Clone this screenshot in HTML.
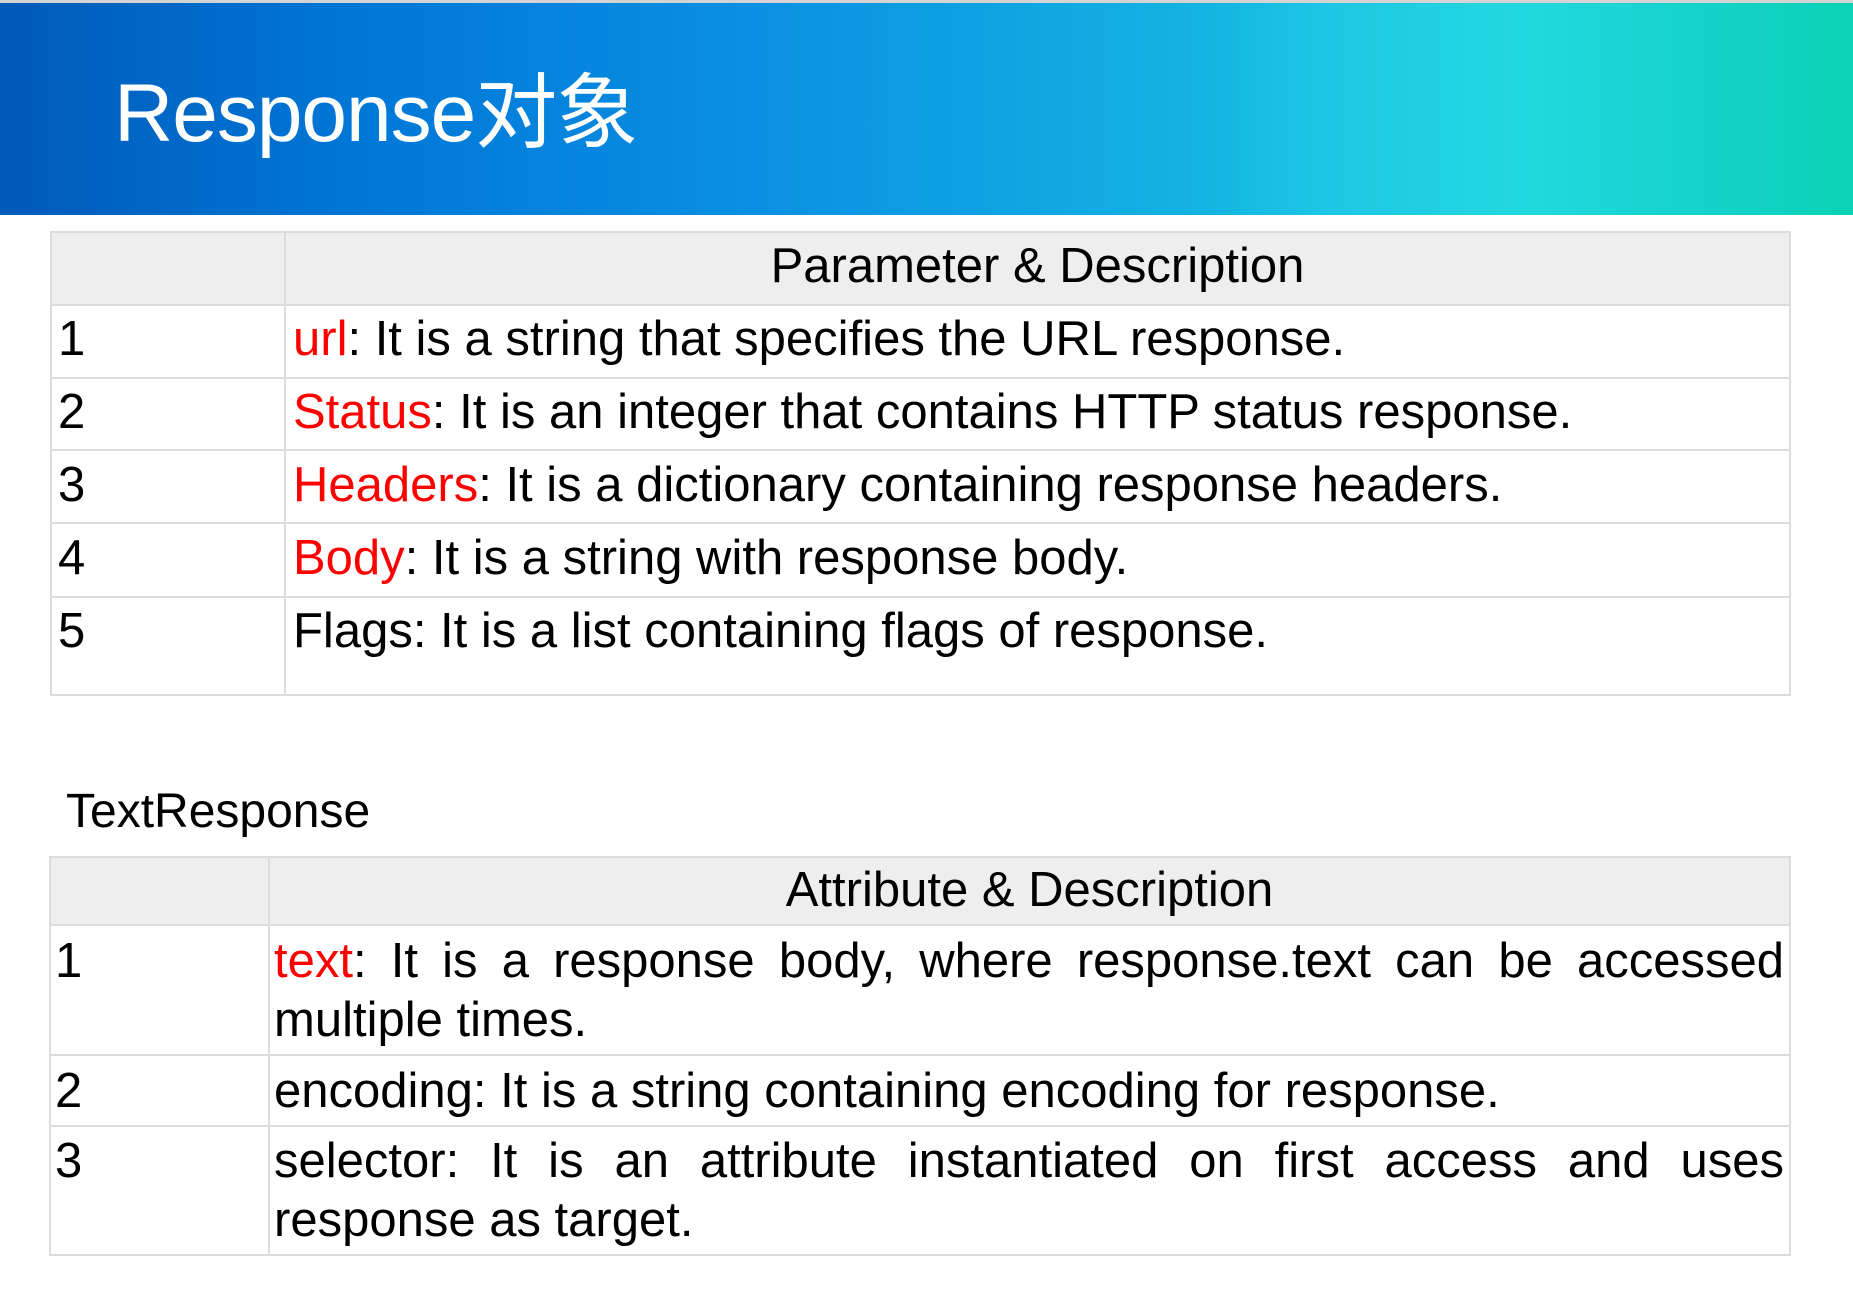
<!DOCTYPE html>
<html><head><meta charset="utf-8"><style>
*{margin:0;padding:0;box-sizing:border-box}
body{width:1853px;height:1295px;background:#fff;position:relative;overflow:hidden;font-family:"Liberation Sans",Arial,sans-serif;color:#000}
.top{position:absolute;left:0;top:0;width:1853px;height:3px;background:#d4d4d4}
.banner{position:absolute;left:0;top:3px;width:1853px;height:212px;background:linear-gradient(90deg,#005ab8 0%,#0078d8 20%,#0a8fe2 40%,#14b4e2 65%,#1ec8e4 72%,#22d8e0 82%,#14d2c8 93%,#0ad2b4 100%)}
.title{position:absolute;left:114px;top:64px;font-size:82px;line-height:100px;color:#fff;font-family:"Liberation Sans","Noto Sans CJK SC",sans-serif;white-space:nowrap;letter-spacing:-1px}
.b{position:absolute;background:#dcdcdc}
.hd{position:absolute;background:#eeeeee}
.t{position:absolute;font-size:49px;line-height:57px;white-space:nowrap}
.r{color:#f00}
.j{position:absolute;font-size:49px;line-height:59px;text-align:justify;text-align-last:left}
</style></head><body>
<div class="top"></div>
<div class="banner"></div>
<div class="title">Response对象</div>

<!-- table 1 -->
<div class="hd" style="left:51px;top:231px;width:1739px;height:74px"></div>
<div class="b" style="left:51px;top:231px;width:1739px;height:2px"></div>
<div class="b" style="left:51px;top:304px;width:1739px;height:2px"></div>
<div class="b" style="left:51px;top:377px;width:1739px;height:2px"></div>
<div class="b" style="left:51px;top:449px;width:1739px;height:2px"></div>
<div class="b" style="left:51px;top:522px;width:1739px;height:2px"></div>
<div class="b" style="left:51px;top:596px;width:1739px;height:2px"></div>
<div class="b" style="left:51px;top:694px;width:1739px;height:2px"></div>
<div class="b" style="left:50px;top:231px;width:2px;height:465px"></div>
<div class="b" style="left:284px;top:231px;width:2px;height:465px"></div>
<div class="b" style="left:1789px;top:231px;width:2px;height:465px"></div>

<div class="t" style="left:286px;width:1503px;text-align:center;top:238px">Parameter &amp; Description</div>
<div class="t" style="left:58px;top:311px">1</div>
<div class="t" style="left:293px;top:311px"><span class="r">url</span>: It is a string that specifies the URL response.</div>
<div class="t" style="left:58px;top:384px">2</div>
<div class="t" style="left:293px;top:384px"><span class="r">Status</span>: It is an integer that contains HTTP status response.</div>
<div class="t" style="left:58px;top:457px">3</div>
<div class="t" style="left:293px;top:457px"><span class="r">Headers</span>: It is a dictionary containing response headers.</div>
<div class="t" style="left:58px;top:530px">4</div>
<div class="t" style="left:293px;top:530px"><span class="r">Body</span>: It is a string with response body.</div>
<div class="t" style="left:58px;top:603px">5</div>
<div class="t" style="left:293px;top:603px">Flags: It is a list containing flags of response.</div>

<div class="t" style="left:66px;top:783px;font-size:48px">TextResponse</div>

<!-- table 2 -->
<div class="hd" style="left:50px;top:856px;width:1740px;height:69px"></div>
<div class="b" style="left:50px;top:856px;width:1740px;height:2px"></div>
<div class="b" style="left:50px;top:924px;width:1740px;height:2px"></div>
<div class="b" style="left:50px;top:1054px;width:1740px;height:2px"></div>
<div class="b" style="left:50px;top:1125px;width:1740px;height:2px"></div>
<div class="b" style="left:50px;top:1254px;width:1740px;height:2px"></div>
<div class="b" style="left:49px;top:856px;width:2px;height:400px"></div>
<div class="b" style="left:268px;top:856px;width:2px;height:400px"></div>
<div class="b" style="left:1789px;top:856px;width:2px;height:400px"></div>

<div class="t" style="left:270px;width:1519px;text-align:center;top:862px">Attribute &amp; Description</div>
<div class="t" style="left:55px;top:933px">1</div>
<div class="j" style="left:274px;width:1510px;top:932px"><span class="r">text</span>: It is a response body, where response.text can be accessed multiple times.</div>
<div class="t" style="left:55px;top:1063px">2</div>
<div class="t" style="left:274px;top:1063px">encoding: It is a string containing encoding for response.</div>
<div class="t" style="left:55px;top:1133px">3</div>
<div class="j" style="left:274px;width:1510px;top:1132px">selector: It is an attribute instantiated on first access and uses response as target.</div>
</body></html>
